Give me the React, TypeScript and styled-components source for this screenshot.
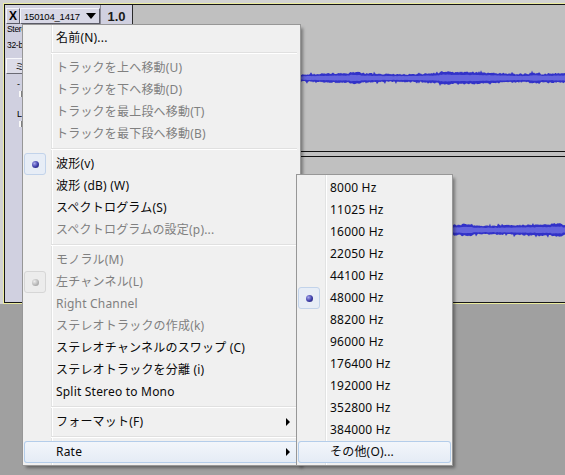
import React, { useMemo } from 'react';
import styled, { createGlobalStyle, css } from 'styled-components';

const GlobalStyle = createGlobalStyle`
  html, body { margin: 0; padding: 0; }
  body {
    background: #a0a0a0;
    font-family: "Noto Sans", "Noto Sans CJK JP", sans-serif;
  }
  #root { width: 565px; height: 475px; }
`;

const Stage = styled.div`
  position: relative;
  width: 565px;
  height: 475px;
  overflow: hidden;
  background: #a0a0a0;
`;

const TrackBand = styled.div`
  background: #d2d2d2;
  padding: 3px 0 0 3px;
`;

const TrackOuter = styled.div`
  height: 301px;
  box-sizing: border-box;
  border: 1px solid #ecec9e;
  border-right: none;
`;

const TrackInner = styled.div`
  height: 299px;
  box-sizing: border-box;
  border: 1px solid #161616;
  border-right: none;
  display: flex;
`;

const ControlPanel = styled.div`
  width: 95px;
  flex: none;
  background: #d0d0e0;
  display: flex;
  flex-direction: column;
`;

const Header = styled.div`
  display: flex;
  height: 16px;
  margin-top: 3px;
  margin-left: 1px;
`;

const CloseBox = styled.div`
  width: 14px;
  box-sizing: border-box;
  border: 1px solid;
  border-color: #f4f4fa #5a5a66 #5a5a66 #f4f4fa;
  display: flex;
  align-items: center;
  justify-content: center;
  font: bold 12px "Liberation Sans", sans-serif;
  color: #000;
`;

const NameBox = styled.div`
  flex: 1;
  box-sizing: border-box;
  border: 1px solid;
  border-color: #f4f4fa #5a5a66 #5a5a66 #f4f4fa;
  display: flex;
  align-items: center;
  justify-content: space-between;
  padding: 0 3px 0 3px;
  font: 9.5px "Liberation Sans", sans-serif;
  letter-spacing: -0.2px;
  color: #000;
  background: #d8d8e6;
`;

const DropArrow = styled.span`
  width: 0;
  height: 0;
  border-top: 6px solid #000;
  border-left: 5px solid transparent;
  border-right: 5px solid transparent;
`;

const InfoBlock = styled.div`
  display: flex;
  flex-direction: column;
  gap: 8px;
  padding-left: 2px;
  margin-top: 1px;
`;

const InfoLine = styled.div`
  font: 8.5px "Liberation Sans", sans-serif;
  line-height: 8px;
  height: 8px;
  white-space: nowrap;
  letter-spacing: -0.3px;
  color: #000;
`;

const PanelButton = styled.div`
  margin: 9px 0 0 1px;
  width: 54px;
  height: 16px;
  box-sizing: border-box;
  border: 1px solid;
  border-color: #f8f8fc #6a6a74 #6a6a74 #f8f8fc;
  background: #dcdce8;
  display: flex;
  align-items: center;
  justify-content: center;
  font: 9px "Noto Sans CJK JP", sans-serif;
  color: #000;
`;

const SliderRow = styled.div<{ $top: number }>`
  margin-top: ${p => p.$top}px;
  padding-left: 12px;
  display: flex;
  flex-direction: column;
  align-items: flex-start;
  gap: 2px;
`;

const SliderLabel = styled.span`
  font: 9px "Liberation Sans", sans-serif;
  line-height: 9px;
  color: #000;
`;

const SliderTick = styled.span`
  margin-left: 2px;
  width: 2px;
  height: 6px;
  background: #f8f8f8;
  border-right: 1px solid #808080;
`;

const Ruler = styled.div`
  width: 33px;
  flex: none;
  box-sizing: border-box;
  border-left: 1px solid #8a8a96;
  border-right: 1px solid #2a2a2a;
  background: #d0d0e0;
`;

const RulerLabel = styled.div`
  margin-top: 3px;
  height: 16px;
  display: flex;
  align-items: center;
  justify-content: center;
  font: bold 13px "Liberation Sans", sans-serif;
  color: #1a1a1a;
`;

const WaveArea = styled.div`
  flex: 1;
  background: #c0c0c0;
  display: flex;
  flex-direction: column;
  min-width: 0;
`;

const Channel = styled.div<{ $h: number }>`
  height: ${p => p.$h}px;
  display: flex;
  align-items: center;
`;

const ChannelDivider = styled.div`
  height: 6px;
  box-sizing: border-box;
  border-top: 1px solid #101010;
  border-bottom: 1px solid #101010;
`;

const WaveSvg = styled.svg`
  display: block;
  width: 100%;
  height: 22px;
`;

/* ---------- menus ---------- */

const MenuBox = styled.div<{ $left: number; $top: number; $width: number }>`
  position: absolute;
  left: ${p => p.$left}px;
  top: ${p => p.$top}px;
  width: ${p => p.$width}px;
  box-sizing: border-box;
  padding: 2px 1px;
  border: 1px solid #979797;
  background-color: #f0f0f0;
  background-image: linear-gradient(
    to right,
    transparent 28px,
    #e2e3e3 28px,
    #e2e3e3 29px,
    #ffffff 29px,
    #ffffff 30px,
    transparent 30px
  );
  box-shadow: 3px 3px 3px -1px rgba(0, 0, 0, 0.38);
  font-family: "Noto Sans", "Noto Sans CJK JP", sans-serif;
`;

const Item = styled.div<{ $disabled?: boolean; $active?: boolean }>`
  display: grid;
  grid-template-columns: 32px 1fr 22px;
  align-items: center;
  height: 22px;
  border-radius: 3px;
  font-size: 12px;
  letter-spacing: 0.2px;
  white-space: nowrap;
  color: ${p => (p.$disabled ? '#808080' : '#0a0a0a')};
  ${p =>
    p.$active &&
    css`
      box-shadow: inset 0 0 0 1px #b4cdea;
      background: linear-gradient(#f3f6fb, #e4ebf5);
    `}
`;

const IconCell = styled.div`
  display: flex;
  align-items: center;
`;

const RadioFrame = styled.div<{ $disabled?: boolean }>`
  width: 22px;
  height: 22px;
  box-sizing: border-box;
  border-radius: 3px;
  display: flex;
  align-items: center;
  justify-content: center;
  border: 1px solid ${p => (p.$disabled ? '#d6d6d6' : '#c2d3ea')};
  background: ${p => (p.$disabled ? '#ececec' : '#e7edf6')};
`;

const Bullet = styled.div<{ $disabled?: boolean }>`
  width: 7px;
  height: 7px;
  border-radius: 50%;
  background: ${p =>
    p.$disabled
      ? 'radial-gradient(circle at 35% 35%, #ececec 0%, #a6a6a6 75%)'
      : 'radial-gradient(circle at 35% 35%, #a8a8ec 0%, #3c3ca8 55%, #202060 100%)'};
`;

const Label = styled.span`
  line-height: 22px;
`;

const SubArrow = styled.span`
  justify-self: center;
  width: 0;
  height: 0;
  border-left: 4px solid #000;
  border-top: 4px solid transparent;
  border-bottom: 4px solid transparent;
`;

const Separator = styled.div`
  height: 8px;
  display: flex;
  align-items: center;
  padding: 0 2px 0 27px;
  &::before {
    content: '';
    flex: 1;
    height: 1px;
    background: #e0e0e0;
    border-bottom: 1px solid #ffffff;
  }
`;

type Entry =
  | 'sep'
  | {
      t: string;
      d?: boolean;
      radio?: 'on' | 'off';
      sub?: boolean;
      active?: boolean;
    };

const mainItems: Entry[] = [
  { t: '名前(N)...' },
  'sep',
  { t: 'トラックを上へ移動(U)', d: true },
  { t: 'トラックを下へ移動(D)', d: true },
  { t: 'トラックを最上段へ移動(T)', d: true },
  { t: 'トラックを最下段へ移動(B)', d: true },
  'sep',
  { t: '波形(v)', radio: 'on' },
  { t: '波形 (dB) (W)' },
  { t: 'スペクトログラム(S)' },
  { t: 'スペクトログラムの設定(p)...', d: true },
  'sep',
  { t: 'モノラル(M)', d: true },
  { t: '左チャンネル(L)', d: true, radio: 'off' },
  { t: 'Right Channel', d: true },
  { t: 'ステレオトラックの作成(k)', d: true },
  { t: 'ステレオチャンネルのスワップ (C)' },
  { t: 'ステレオトラックを分離 (i)' },
  { t: 'Split Stereo to Mono' },
  'sep',
  { t: 'フォーマット(F)', sub: true },
  'sep',
  { t: 'Rate', sub: true, active: true },
];

const rateItems: Entry[] = [
  { t: '8000 Hz' },
  { t: '11025 Hz' },
  { t: '16000 Hz' },
  { t: '22050 Hz' },
  { t: '44100 Hz' },
  { t: '48000 Hz', radio: 'on' },
  { t: '88200 Hz' },
  { t: '96000 Hz' },
  { t: '176400 Hz' },
  { t: '192000 Hz' },
  { t: '352800 Hz' },
  { t: '384000 Hz' },
  { t: 'その他(O)...', active: true },
];

function MenuList({ items }: { items: Entry[] }) {
  return (
    <>
      {items.map((e, i) =>
        e === 'sep' ? (
          <Separator key={i} />
        ) : (
          <Item key={i} $disabled={e.d} $active={e.active}>
            <IconCell>
              {e.radio && (
                <RadioFrame $disabled={e.radio === 'off'}>
                  <Bullet $disabled={e.radio === 'off'} />
                </RadioFrame>
              )}
            </IconCell>
            <Label>{e.t}</Label>
            {e.sub ? <SubArrow /> : <span />}
          </Item>
        )
      )}
    </>
  );
}

function buildWave(seed: number, w: number, c: number) {
  let s = seed * 7919 + 13;
  const rnd = () => {
    s = (s * 16807) % 2147483647;
    return (s - 1) / 2147483646;
  };
  const up: string[] = [];
  const lo: string[] = [];
  const rUp: string[] = [];
  const rLo: string[] = [];
  for (let x = 0; x <= w; x++) {
    const e =
      3.8 +
      0.8 * Math.sin(x / 19 + seed) +
      0.6 * Math.sin(x / 47 + seed * 2.3) +
      (Math.abs(((x + seed * 31) % 90) - 45) < 6 ? 1.0 : 0);
    const a = e + rnd() * 1.4 + (rnd() < 0.07 ? rnd() * 2.6 : 0);
    const b = e + rnd() * 1.4 + (rnd() < 0.07 ? rnd() * 2.6 : 0);
    up.push(`${x},${(c - a).toFixed(1)}`);
    lo.push(`${x},${(c + b).toFixed(1)}`);
    const r = e * 0.55 + rnd() * 0.5;
    rUp.push(`${x},${(c - r).toFixed(1)}`);
    rLo.push(`${x},${(c + r).toFixed(1)}`);
  }
  return {
    peak: up.concat(lo.reverse()).join(' '),
    rms: rUp.concat(rLo.reverse()).join(' '),
  };
}

function Wave({ seed }: { seed: number }) {
  const w = useMemo(() => buildWave(seed, 432, 11), [seed]);
  return (
    <WaveSvg viewBox="0 0 432 22" preserveAspectRatio="none">
      <polygon points={w.peak} fill="#3232c8" />
      <polygon points={w.rms} fill="#6464dc" />
    </WaveSvg>
  );
}

export default function App() {
  return (
    <Stage>
      <GlobalStyle />
      <TrackBand>
        <TrackOuter>
          <TrackInner>
            <ControlPanel>
              <Header>
                <CloseBox>X</CloseBox>
                <NameBox>
                  <span>150104_1417</span>
                  <DropArrow />
                </NameBox>
              </Header>
              <InfoBlock>
                <InfoLine>Stereo, 48000Hz</InfoLine>
                <InfoLine>32-bit float</InfoLine>
              </InfoBlock>
              <PanelButton>ミュート</PanelButton>
              <SliderRow $top={6}>
                <SliderLabel>-</SliderLabel>
                <SliderTick />
              </SliderRow>
              <SliderRow $top={13}>
                <SliderLabel>L</SliderLabel>
                <SliderTick />
              </SliderRow>
            </ControlPanel>
            <Ruler>
              <RulerLabel>1.0</RulerLabel>
            </Ruler>
            <WaveArea>
              <Channel $h={146}>
                <Wave seed={3} />
              </Channel>
              <ChannelDivider />
              <Channel $h={145}>
                <Wave seed={11} />
              </Channel>
            </WaveArea>
          </TrackInner>
        </TrackOuter>
      </TrackBand>

      <MenuBox $left={22} $top={24} $width={279}>
        <MenuList items={mainItems} />
      </MenuBox>
      <MenuBox $left={296} $top={174} $width={157}>
        <MenuList items={rateItems} />
      </MenuBox>
    </Stage>
  );
}
